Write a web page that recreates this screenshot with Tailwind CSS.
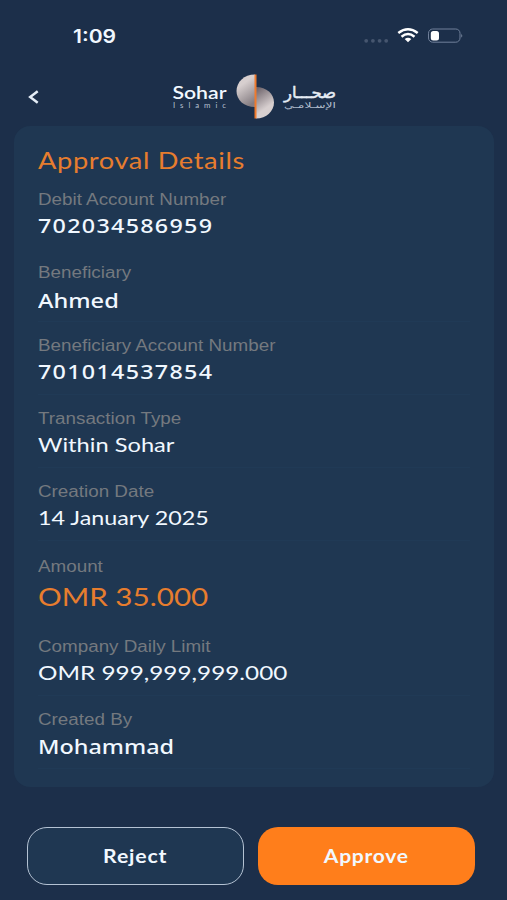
<!DOCTYPE html>
<html lang="en">
<head>
    <meta charset="UTF-8">
    <title>Approval Details</title>
    <script src="https://cdn.jsdelivr.net/npm/@tailwindcss/browser@4"></script>
</head>
<body class="bg-[#1c2f4a] font-[Lato,sans-serif] text-[#f1f8ff] overflow-hidden">
    <div class="w-[507px] h-[900px] flex flex-col">
        <!-- Status bar -->
        <div class="h-[72px] pl-[73px] pr-[43px] flex justify-between items-center">
            <span class="font-[Inter,sans-serif] font-semibold text-[19px] leading-6 text-[#f1f8ff] mt-[2px] origin-left scale-x-[1.11]">1:09</span>
            <svg class="w-[100px] h-6" viewBox="0 0 100 24">
                <g fill="#46566f">
                    <circle cx="2.200" cy="16.800" r="1.900"/><circle cx="8.900" cy="16.800" r="1.900"/><circle cx="15.600" cy="16.800" r="1.900"/><circle cx="22.200" cy="16.800" r="1.900"/>
                </g>
                <g fill="none" stroke="#fff" stroke-width="2.500">
                    <path d="M34.300 9.100Q44 1.500 53.700 9.100"/>
                    <path d="M37.500 12.700Q44 7.300 50.500 12.700"/>
                </g>
                <path d="M40.700 15Q44 12.400 47.300 15L44 18.200Z" fill="#fff"/>
                <rect x="64.500" y="5" width="31.500" height="13.200" rx="4.200" fill="none" stroke="#70809a"/>
                <rect x="66.800" y="7" width="8.200" height="9.500" rx="2.500" fill="#fff"/>
                <path d="M97.300 9.500q1.800 2 0 4.200z" fill="#8190a6"/>
            </svg>
        </div>

        <!-- Header -->
        <div class="h-[54px] pl-[28px] flex items-center">
            <svg class="w-3 h-4 mb-[4px]" viewBox="0 0 12 16">
                <path d="M9.700 2.300L2.200 8L9.700 13.700" fill="none" stroke="#e4edf6" stroke-width="2.500"/>
            </svg>
            <svg class="w-[168px] h-[50px] ml-[130px]" viewBox="170 74 168 50">
                <defs>
                    <linearGradient id="left" x1="0.200" y1="0" x2="0.600" y2="1">
                        <stop offset="0.300" stop-color="#d7cfcf"/><stop offset="1" stop-color="#857d82"/>
                    </linearGradient>
                    <linearGradient id="right" x1="0.200" y1="0" x2="0.600" y2="1">
                        <stop offset="0" stop-color="#70666d"/><stop offset="0.700" stop-color="#d7cfcf"/>
                    </linearGradient>
                </defs>
                <text x="172.500" y="98.800" font-family="Lato" font-weight="600" font-size="18" fill="#f1f8ff" textLength="54" lengthAdjust="spacingAndGlyphs">Sohar</text>
                <text x="173" y="107.800" font-family="Lato" font-size="7.800" fill="#b5c0d0" textLength="53">Islamic</text>
                <path d="M255 74.500C244 74.500 236.500 82 236.500 91S244 107 255 107Z" fill="url(#left)"/>
                <path d="M256 87C266.500 87 274 94 274 102.500S266.500 118.500 256 118.500Z" fill="url(#right)"/>
                <path d="M255.500 74.500V118.500" stroke="#f07a2c" stroke-width="2"/>
                <text x="336" y="98" direction="rtl" font-family="DejaVu Sans" font-size="16" fill="#e6edf5" stroke="#e6edf5" stroke-width="0.500" textLength="52" lengthAdjust="spacingAndGlyphs">صحـــار</text>
                <text x="336" y="107.500" direction="rtl" font-family="DejaVu Sans" font-size="8" fill="#b5c0d0" textLength="52" lengthAdjust="spacingAndGlyphs">الإسـلامـي</text>
            </svg>
        </div>

        <!-- Details card -->
        <div class="ml-[14px] mr-[13px] h-[661px] rounded-[16px] bg-[#1f3752] px-6">
            <h1 class="h-[50px] pt-[18px] text-[24px] leading-8 text-[#e77d2e]"><span class="inline-block origin-left scale-x-[1.135] tracking-[0.55px]">Approval Details</span></h1>
            <div class="h-[73px] pt-[14px]">
                <p class="w-fit font-['Liberation_Sans',sans-serif] text-[16px] leading-5 text-[#74797f] origin-left scale-x-[1.176]">Debit Account Number</p>
                <p class="w-fit font-['Noto_Sans',sans-serif] font-medium text-[20px] leading-6 mt-[4px] origin-left scale-x-[1.165] tracking-[1.1px]">702034586959</p>
            </div>
            <div class="h-[73px] pt-[14px] border-b border-[#203a56]">
                <p class="w-fit font-['Liberation_Sans',sans-serif] text-[16px] leading-5 text-[#74797f] origin-left scale-x-[1.176]">Beneficiary</p>
                <p class="w-fit font-['Noto_Sans',sans-serif] font-medium text-[20px] leading-6 mt-[6px] origin-left scale-x-[1.18]">Ahmed</p>
            </div>
            <div class="h-[73px] pt-[14px] border-b border-[#203a56]">
                <p class="w-fit font-['Liberation_Sans',sans-serif] text-[16px] leading-5 text-[#74797f] origin-left scale-x-[1.176]">Beneficiary Account Number</p>
                <p class="w-fit font-['Noto_Sans',sans-serif] font-medium text-[20px] leading-6 mt-[4px] origin-left scale-x-[1.165] tracking-[1.1px]">701014537854</p>
            </div>
            <div class="h-[73px] pt-[14px] border-b border-[#203a56]">
                <p class="w-fit font-['Liberation_Sans',sans-serif] text-[16px] leading-5 text-[#74797f] origin-left scale-x-[1.176]">Transaction Type</p>
                <p class="w-fit text-[20px] leading-6 mt-[3px] origin-left scale-x-[1.183]">Within Sohar</p>
            </div>
            <div class="h-[73px] pt-[14px] border-b border-[#203a56]">
                <p class="w-fit font-['Liberation_Sans',sans-serif] text-[16px] leading-5 text-[#74797f] origin-left scale-x-[1.176]">Creation Date</p>
                <p class="w-fit text-[20px] leading-6 mt-[3px] origin-left scale-x-[1.165]">14 January 2025</p>
            </div>
            <div class="h-[82px] pt-[16px]">
                <p class="w-fit font-['Liberation_Sans',sans-serif] text-[16px] leading-5 text-[#74797f] origin-left scale-x-[1.176]">Amount</p>
                <p class="w-fit text-[25px] leading-8 mt-[3px] text-[#e77d2e] origin-left scale-x-[1.185]">OMR 35.000</p>
            </div>
            <div class="h-[73px] pt-[14px] border-b border-[#203a56]">
                <p class="w-fit font-['Liberation_Sans',sans-serif] text-[16px] leading-5 text-[#74797f] origin-left scale-x-[1.176]">Company Daily Limit</p>
                <p class="w-fit text-[20px] leading-6 mt-[3px] origin-left scale-x-[1.215]">OMR 999,999,999.000</p>
            </div>
            <div class="h-[73px] pt-[14px] border-b border-[#203a56]">
                <p class="w-fit font-['Liberation_Sans',sans-serif] text-[16px] leading-5 text-[#74797f] origin-left scale-x-[1.176]">Created By</p>
                <p class="w-fit font-['Noto_Sans',sans-serif] font-medium text-[20px] leading-6 mt-[5px] origin-left scale-x-[1.17]">Mohammad</p>
            </div>
        </div>

        <!-- Actions -->
        <div class="mt-[40px] px-[27px] flex gap-[14px]">
            <button class="w-[217px] h-[58px] rounded-[20px] border-[1.5px] border-[#b4c2d3] bg-[#1f3752] font-bold text-[18px]"><span class="inline-block scale-x-[1.18] tracking-[0.7px]">Reject</span></button>
            <button class="w-[217px] h-[58px] rounded-[20px] bg-[#ff7e1b] font-bold text-[18px]"><span class="inline-block scale-x-[1.17] tracking-[0.6px]">Approve</span></button>
        </div>
    </div>
</body>
</html>
